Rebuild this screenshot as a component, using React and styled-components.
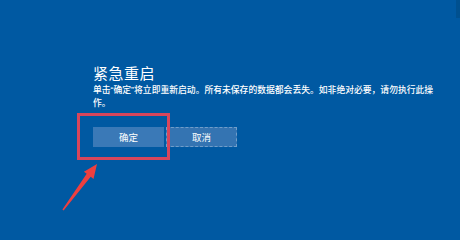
import React from 'react';
import styled, { createGlobalStyle } from 'styled-components';

const Global = createGlobalStyle`
  html, body {
    margin: 0;
    padding: 0;
    background: #0059a2;
  }
  body {
    font-family: "Noto Sans CJK SC", "Noto Sans", sans-serif;
  }
`;

const Screen = styled.div`
  position: relative;
  width: 460px;
  height: 240px;
  overflow: hidden;
  background: #0059a2;
  color: #fff;
  box-sizing: border-box;
  padding: 63px 0 0 93px;
`;

const Title = styled.h1`
  margin: 0;
  font-size: 15px;
  font-weight: 400;
  line-height: 20px;
  letter-spacing: 0.5px;
`;

// Latin font first so the curly quotes stay narrow, as in the screenshot
const Message = styled.p`
  margin: 1px 0 0;
  width: 345px;
  font-family: "Liberation Sans", "Noto Sans CJK SC", sans-serif;
  font-size: 8.8px;
  line-height: 13px;
  font-weight: 500;
`;

const Actions = styled.div`
  position: relative;
  display: flex;
  gap: 2px;
  margin-top: 17px;
`;

const Button = styled.button`
  width: 71px;
  height: 20px;
  padding: 0;
  border: 1px ${p => (p.$focus ? 'dashed rgba(255,255,255,0.3)' : 'solid #3a79b7')};
  background: ${p => (p.$focus ? '#3474b2' : '#3a79b7')};
  color: #fff;
  font-family: inherit;
  font-size: 9.5px;
  line-height: 18px;
  cursor: pointer;
`;

const Highlight = styled.div`
  position: absolute;
  left: -16px;
  top: -14px;
  width: 87px;
  height: 41px;
  border: 3px solid #d8465c;
  pointer-events: none;
`;

const Arrow = styled.svg`
  position: absolute;
  left: 55px;
  top: 155px;
  width: 50px;
  height: 60px;
  pointer-events: none;
`;

const TopEdge = styled.div`
  position: absolute;
  right: 0;
  top: 0;
  width: 4px;
  height: 18px;
  background: #00508f;
`;

export default function App() {
  return (
    <>
      <Global />
      <Screen>
        <TopEdge />
        <Title>紧急重启</Title>
        <Message>
          单击“确定”将立即重新启动。所有未保存的数据都会丢失。如非绝对必要，请勿执行此操作。
        </Message>
        <Actions>
          <Button>确定</Button>
          <Button $focus>取消</Button>
          <Highlight />
        </Actions>
        <Arrow viewBox="55 155 50 60">
          <polygon
            points="97,164 93.5,178.9 90.7,176.8 63.6,210.4 62.4,209.6 86.7,173.8 83.9,171.7"
            fill="#ee3f3f"
          />
        </Arrow>
      </Screen>
    </>
  );
}
